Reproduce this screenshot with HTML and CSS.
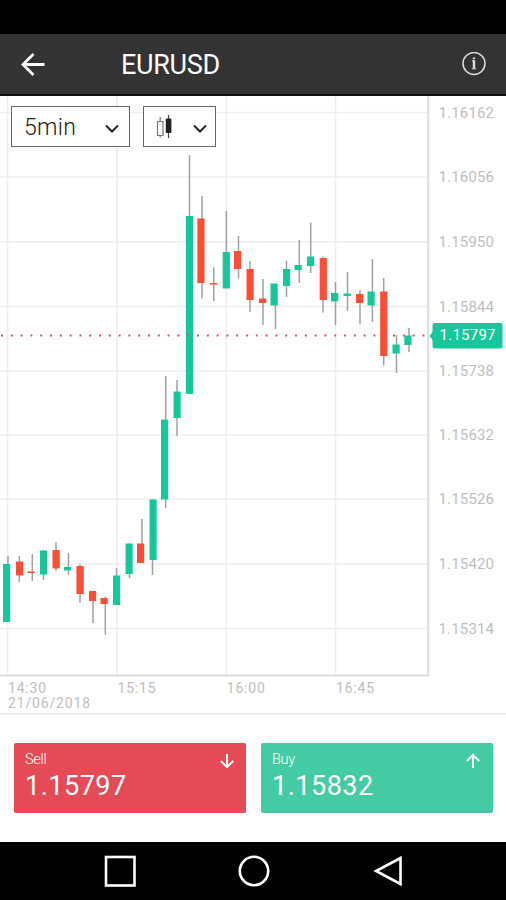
FILE: index.html
```html
<!DOCTYPE html>
<html lang="en">
<head>
    <meta charset="UTF-8">
    <title>EURUSD</title>
    <link rel="stylesheet" href="styles.css">
</head>
<body>
<div class="phone">
    <div class="status-bar"></div>

    <div class="header">
        <svg class="back" width="26" height="26" viewBox="0 0 26 26">
            <path d="M24.500 13.500H3.500M13.500 3L3 13.500L13.500 24"/>
        </svg>
        <h1>EURUSD</h1>
        <svg class="info" width="24" height="24" viewBox="0 0 24 24">
            <circle cx="12" cy="11.500" r="11"/>
            <path class="info-stem" d="M12 5.500v1.800M12 8.300v8.500"/>
            <path class="info-foot" d="M10 8.800h2M9.800 16.800h4.400"/>
        </svg>
    </div>

    <div class="chart">
        <svg class="plot" width="506" height="619" viewBox="0 96 506 619">
            <g class="grid"></g>
            <path class="axis" d="M428.200 96V675.500M0 675.500H429"/>
            <g class="wicks"></g>
            <g class="bodies"></g>
            <path class="price-line" d="M1 335.500H428"/>
            <g class="labels"></g>
            <path class="tag" d="M429.500 336l3-4v-7q0-2 2-2h66q2 0 2 2v21.500q0 2-2 2h-66q-2 0-2-2v-6.500z"/>
            <text class="tag-text" x="439.500" y="339.500" textLength="56">1.15797</text>
            <path class="bottom-line" d="M0 714H506"/>
        </svg>

        <div class="tools">
            <div class="select period">
                <span>5min</span>
                <svg width="14" height="10" viewBox="0 0 14 10"><path d="M1 1.500L7 7.500L13 1.500"/></svg>
            </div>
            <div class="select type">
                <svg class="candle-icon" width="18" height="26" viewBox="0 0 18 26">
                    <path class="hollow" d="M4.200 3v4M4.200 21.500v2M1.500 7.500h5.500v14h-5.500z"/>
                    <path class="wick" d="M12.500 1v23"/>
                    <rect x="9.800" y="4.500" width="5.600" height="14.500" rx="1"/>
                </svg>
                <svg width="14" height="10" viewBox="0 0 14 10"><path d="M1 1.500L7 7.500L13 1.500"/></svg>
            </div>
        </div>
    </div>

    <div class="deal">
        <div class="btn sell">
            <span class="name">Sell</span>
            <span class="price">1.15797</span>
            <svg width="16" height="16" viewBox="0 0 16 16"><path d="M8 1v13M1.800 8L8 14L14.200 8"/></svg>
        </div>
        <div class="btn buy">
            <span class="name">Buy</span>
            <span class="price">1.15832</span>
            <svg width="16" height="16" viewBox="0 0 16 16"><path d="M8 15V2M1.800 8L8 2L14.200 8"/></svg>
        </div>
    </div>

    <div class="nav-bar">
        <svg width="34" height="34" viewBox="0 0 34 34"><rect x="3" y="3" width="28.500" height="28.500"/></svg>
        <svg width="34" height="34" viewBox="0 0 34 34"><circle cx="17" cy="17" r="14.200"/></svg>
        <svg width="34" height="34" viewBox="0 0 34 34"><path d="M29.500 4v26L5 17z"/></svg>
    </div>
</div>

<script src="chart.js"></script>
</body>
</html>
```

FILE: styles.css
```css
*{
    margin: 0;
    padding: 0;
    box-sizing: border-box;
}
body{
    background-color: #fff;
    font-family: Roboto, "Liberation Sans", sans-serif;
}
svg{
    display: block;
    fill: none;
}
.phone{
    display: flex;
    flex-direction: column;
    width: 506px;
    height: 900px;
    overflow: hidden;
}
.status-bar{
    height: 34px;
    background-color: #000;
}

/* header */
.header{
    display: flex;
    align-items: center;
    height: 62px;
    padding: 0 20px;
    background-color: #333;
    border-bottom: 2px solid #111;
}
.header h1{
    flex: 1;
    margin-left: 75px;
    padding-top: 2px;
    font-size: 27px;
    font-weight: 400;
    letter-spacing: -0.3px;
    color: #fff;
}
.back{
    stroke: #fff;
    stroke-width: 2.8;
}
.info{
    stroke: #ddd;
    stroke-width: 1.5;
}
.info-stem{
    stroke-width: 2.4;
}
.info-foot{
    stroke-width: 1;
}

/* chart */
.chart{
    position: relative;
    height: 619px;
}
.grid{
    stroke: #eee;
    stroke-width: 1.6;
}
.axis{
    stroke: #dcdcdc;
    stroke-width: 2;
}
.wicks{
    stroke: #a0a0a0;
    stroke-width: 1.5;
}
.up{
    fill: #17c79c;
}
.down{
    fill: #fd4d36;
}
.price-line{
    stroke: #d9536a;
    stroke-width: 2;
    stroke-dasharray: 2 7.8;
}
.labels{
    fill: #bebebe;
    font-size: 15px;
}
.labels .small{
    font-size: 14px;
}
.tag{
    fill: #17c79c;
}
.tag-text{
    fill: #fff;
    font-size: 15px;
}
.bottom-line{
    stroke: #ececec;
    stroke-width: 2;
}
.tools{
    position: absolute;
    top: 10px;
    left: 11px;
    display: flex;
    gap: 12px;
}
.select{
    display: flex;
    align-items: center;
    justify-content: space-between;
    height: 41px;
    background-color: #fff;
    border: 1px solid #666;
    stroke: #222;
    stroke-width: 2;
}
.select span{
    padding-top: 1px;
    font-size: 23px;
    font-weight: 300;
    letter-spacing: 0.3px;
    color: #222;
    stroke: none;
}
.select > svg:last-child{
    margin-top: 4px;
}
.period{
    width: 119px;
    padding: 0 10px 0 12px;
}
.type{
    width: 73px;
    margin-left: 1px;
    padding: 0 8px 0 12px;
}
.candle-icon rect{
    fill: #222;
    stroke: none;
}
.hollow{
    stroke: #777;
    stroke-width: 1.2;
}
.wick{
    stroke: #444;
    stroke-width: 1.2;
}

/* sell / buy */
.deal{
    display: flex;
    gap: 15px;
    height: 127px;
    padding: 28px 13px 29px 14px;
}
.btn{
    position: relative;
    flex: 1;
    display: flex;
    flex-direction: column;
    padding: 8px 11px;
    border-radius: 2px;
    color: #fff;
}
.sell{
    background-color: #e44b57;
}
.buy{
    background-color: #45cba4;
}
.btn .name{
    font-size: 14.5px;
    line-height: 17px;
    font-weight: 300;
    letter-spacing: -0.3px;
}
.btn .price{
    font-size: 27px;
    line-height: 36px;
    letter-spacing: 0.5px;
}
.btn svg{
    position: absolute;
    top: 10px;
    right: 12px;
    stroke: #fff;
    stroke-width: 2;
}
.sell svg{
    right: 11px;
}

.nav-bar{
    display: flex;
    justify-content: center;
    gap: 100px;
    height: 58px;
    padding-top: 12px;
    padding-left: 1px;
    background-color: #000;
}
.nav-bar svg{
    stroke: #fff;
    stroke-width: 2.6;
}
```

FILE: chart.js
```js
const svgNS = 'http://www.w3.org/2000/svg';

// left, body top, body bottom, wick x, high, low, direction
const candles = [
    [3, 564, 622, 8, 556, 622, 'up'],
    [16, 561.5, 575.5, 19.3, 556, 582, 'down'],
    [27.5, 571.5, 573, 32.3, 554, 581, 'down'],
    [40, 550.5, 574.5, 43.5, 550, 580, 'up'],
    [52.5, 550, 568.5, 56, 542, 571, 'down'],
    [64, 567, 570.5, 68.5, 553, 575, 'up'],
    [76.5, 566, 594, 80, 564.5, 603, 'down'],
    [89, 591, 601, 93, 591, 623, 'down'],
    [100.5, 598, 604, 105.3, 596.5, 634.5, 'down'],
    [113, 575.5, 605, 116.5, 568, 605, 'up'],
    [125.5, 543.5, 574, 129.5, 543.5, 578, 'up'],
    [137, 543.5, 563, 142, 519, 563, 'down'],
    [149.5, 499.5, 560, 152.5, 499.5, 575, 'up'],
    [161, 419.5, 499.5, 165.7, 376, 508, 'up'],
    [173.5, 391.5, 418, 177, 380, 436, 'up'],
    [186, 216, 394, 189.5, 155, 394, 'up'],
    [197.3, 218.5, 283, 202, 196, 298.5, 'down'],
    [210, 283, 284.5, 213.8, 267.5, 301, 'down'],
    [222.7, 252, 288.5, 226.4, 211, 288, 'up'],
    [234, 251, 269, 238.5, 236, 278.5, 'down'],
    [246.5, 269, 300, 250, 261, 312, 'down'],
    [259, 298.5, 303, 263, 279, 325, 'down'],
    [270.5, 283.5, 305.5, 275.5, 283.5, 329, 'up'],
    [283, 269, 286, 286.5, 261, 297, 'up'],
    [294.5, 265, 270, 299.3, 240, 283, 'up'],
    [307, 256.5, 266, 310.7, 222.5, 273, 'up'],
    [319.7, 258, 300, 323, 256.5, 312.5, 'down'],
    [331, 293, 301.5, 335.5, 282, 325, 'up'],
    [343.5, 293.5, 296, 347.5, 272, 311, 'up'],
    [356, 294, 303, 360, 290, 324, 'down'],
    [367.5, 291.5, 305.5, 372.4, 259, 322, 'up'],
    [380.2, 291.5, 356, 383.7, 278, 365.5, 'down'],
    [392.5, 344.5, 353.5, 396.5, 335, 373, 'up'],
    [404.3, 335.5, 345, 409, 328, 352, 'up']
];

const prices = [
    ['1.16162', 112.5],
    ['1.16056', 177],
    ['1.15950', 242],
    ['1.15844', 306.5],
    ['1.15738', 371],
    ['1.15632', 435],
    ['1.15526', 499.3],
    ['1.15420', 564],
    ['1.15314', 628.5]
];

const times = [
    ['14:30', 7.5],
    ['15:15', 117],
    ['16:00', 226.3],
    ['16:45', 335.5]
];

function add(parent, tag, attrs, text) {
    const el = document.createElementNS(svgNS, tag);
    for (let key in attrs) {
        el.setAttribute(key, attrs[key]);
    }
    if (text) {
        el.textContent = text;
    }
    document.querySelector(parent).appendChild(el);
}

prices.forEach(function (p) {
    add('.grid', 'path', {d: 'M0 ' + p[1] + 'H428'});
    add('.labels', 'text', {x: 438.5, y: p[1] + 5, textLength: 55.5}, p[0]);
});

times.forEach(function (t) {
    add('.grid', 'path', {d: 'M' + t[1] + ' 96V675'});
    add('.labels', 'text', {x: t[1] + 0.5, y: 693, textLength: 38, class: 'small'}, t[0]);
});
add('.labels', 'text', {x: 8, y: 707.5, textLength: 82, class: 'small'}, '21/06/2018');

candles.forEach(function (c) {
    add('.wicks', 'path', {d: 'M' + c[3] + ' ' + c[4] + 'V' + c[5]});
    add('.bodies', 'rect', {x: c[0], y: c[1], width: 7.2, height: c[2] - c[1], class: c[6]});
});
```
